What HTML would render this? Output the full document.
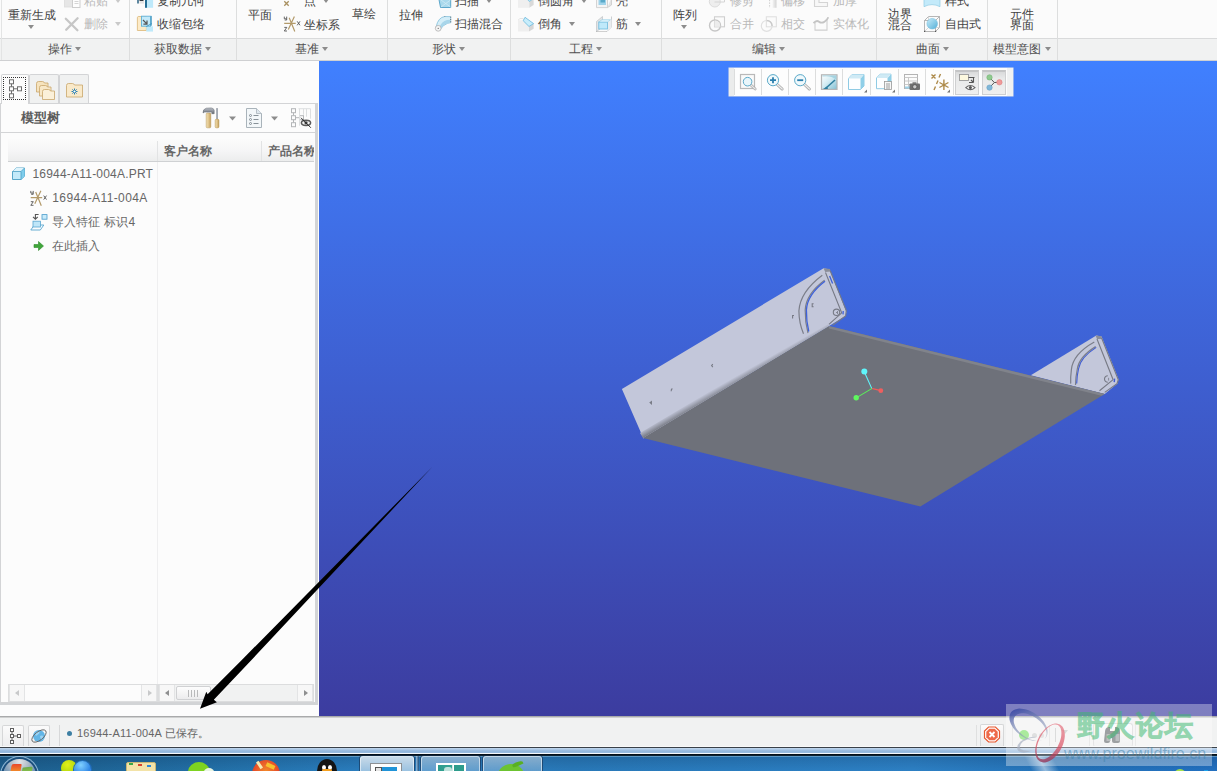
<!DOCTYPE html>
<html lang="zh">
<head>
<meta charset="utf-8">
<title>16944-A11-004A</title>
<style>
html,body{margin:0;padding:0}
body{width:1217px;height:771px;overflow:hidden;position:relative;background:#fcfcfc;font-family:"Liberation Sans",sans-serif;font-size:12px;color:#4a4a4a}
.abs{position:absolute}
#ribbon{left:0;top:0;width:1217px;height:38px;background:#fbfbfb;overflow:hidden}
#glabels{left:0;top:38px;width:1217px;height:21px;background:#f1f2f2;border-top:1px solid #d9dadb;border-bottom:1px solid #cfd0d2}
.gsep{position:absolute;top:0;width:1px;height:60px;background:#dddede}
.gl{position:absolute;top:42px;height:14px;line-height:14px;font-size:12px;color:#505050;white-space:nowrap}
.rt{position:absolute;height:14px;line-height:14px;font-size:12px;color:#444;white-space:nowrap}
.rt.dis{color:#b9b9b9}
.dd{position:absolute;width:0;height:0;border-left:3.5px solid transparent;border-right:3.5px solid transparent;border-top:4px solid #8c8c8c}
.dd.dis{border-top-color:#c9c9c9}
#view{left:319px;top:61px;width:898px;height:655px;background:linear-gradient(to bottom,#4080ff 0%,#3c3c9f 100%)}
#left{left:0;top:61px;width:319px;height:655px;background:#fcfcfc}
#status{left:0;top:716px;width:1217px;height:31px;background:#f1f2f2;border-top:1px solid #a9aaab;box-sizing:border-box}
#taskbar{left:0;top:746px;width:1217px;height:25px;overflow:hidden}
.tab{background:#f0f1f1;border:1px solid #d3d4d6;border-bottom:none;border-radius:2px 2px 0 0;box-sizing:border-box}
.tab.sel{background:#fcfcfc}
.ch{height:14px;line-height:14px;font-size:12px;font-weight:bold;color:#666;white-space:nowrap}
.tr{height:14px;line-height:14px;font-size:12px;color:#666;white-space:nowrap}
.sb{height:18px;background:#fcfcfc;border:1px solid #dcddde;box-sizing:border-box}
.sb.g{background:#f1f2f2}
.sb .sa{position:absolute;top:0;width:16px;height:16px;background:#f7f7f7;border-left:1px solid #e3e4e5;border-right:1px solid #e3e4e5;box-sizing:border-box}
.sb b{position:absolute;top:4.5px;width:0;height:0;border-top:3.5px solid transparent;border-bottom:3.5px solid transparent}
.sb .al{border-right:4px solid #c8c9ca}.sb .ar{border-left:4px solid #c8c9ca}
.sb .al.d{border-right-color:#8e8f90}.sb .ar.d{border-left-color:#8e8f90}
.sbtn{background:linear-gradient(#fbfbfb,#ececed);border:1px solid #d6d7d8;border-bottom:none;box-sizing:border-box;border-radius:2px 2px 0 0}
.vs{top:8px;width:1px;height:22px;background:#dfe0e0}
#taskbar .tbb{position:absolute;top:10px;height:20px;border:1px solid rgba(255,255,255,.55);border-bottom:none;border-radius:3px 3px 0 0;box-sizing:border-box;background:linear-gradient(rgba(255,255,255,.45),rgba(255,255,255,.18));box-shadow:0 0 0 1px rgba(20,40,70,.55)}
.tsep{top:69px;width:1px;height:26px;background:#dcdddd}
.tpress{background:linear-gradient(#d9dadb,#e9eaea 30%,#efefef);border:1px solid #cfd0d1;border-top:2px solid #c4c5c6;box-sizing:border-box}
</style>
</head>
<body>
<div id="ribbon" class="abs">
<span class="rt" style="left:8px;top:8.3px">重新生成</span>
<i class="dd" style="left:28.1px;top:24.6px"></i>
<span class="rt dis" style="left:84px;top:-6.5px">粘贴</span>
<i class="dd dis" style="left:114.8px;top:-1.5px"></i>
<span class="rt dis" style="left:84px;top:17.2px">删除</span>
<i class="dd dis" style="left:114.8px;top:22.2px"></i>
<span class="rt" style="left:157px;top:-6.5px">复制几何</span>
<span class="rt" style="left:157px;top:17.2px">收缩包络</span>
<span class="rt" style="left:248px;top:7.5px">平面</span>
<span class="rt" style="left:304px;top:-6.5px">点</span>
<i class="dd" style="left:322.8px;top:-1.5px"></i>
<span class="rt" style="left:304px;top:17.5px">坐标系</span>
<span class="rt" style="left:352px;top:6.8px">草绘</span>
<span class="rt" style="left:399px;top:7.5px">拉伸</span>
<span class="rt" style="left:455px;top:-6.5px">扫描</span>
<i class="dd" style="left:485.7px;top:-1.5px"></i>
<span class="rt" style="left:455px;top:17.2px">扫描混合</span>
<span class="rt" style="left:538px;top:-6.5px">倒圆角</span>
<i class="dd" style="left:581.3px;top:-1.5px"></i>
<span class="rt" style="left:538px;top:17.2px">倒角</span>
<i class="dd" style="left:568.9px;top:22.2px"></i>
<span class="rt" style="left:616px;top:-6.5px">壳</span>
<span class="rt" style="left:616px;top:17.2px">筋</span>
<i class="dd" style="left:635.0px;top:22.2px"></i>
<span class="rt" style="left:672.5px;top:8.0px">阵列</span>
<i class="dd" style="left:681.1px;top:24.6px"></i>
<span class="rt dis" style="left:729.5px;top:-6.5px">修剪</span>
<span class="rt dis" style="left:729.5px;top:17.2px">合并</span>
<span class="rt dis" style="left:781px;top:-6.5px">偏移</span>
<span class="rt dis" style="left:781px;top:17.2px">相交</span>
<span class="rt dis" style="left:833px;top:-6.5px">加厚</span>
<span class="rt dis" style="left:833px;top:17.2px">实体化</span>
<span class="rt" style="left:888px;top:6.5px">边界</span>
<span class="rt" style="left:888px;top:18.4px">混合</span>
<span class="rt" style="left:944.5px;top:-6.5px">样式</span>
<span class="rt" style="left:944.5px;top:17.2px">自由式</span>
<span class="rt" style="left:1010px;top:6.8px">元件</span>
<span class="rt" style="left:1010px;top:18.4px">界面</span>
<svg class="abs" style="left:0;top:0" width="1217" height="38" viewBox="0 0 1217 38">
<defs>
<linearGradient id="sph" x1="0" y1="0" x2="1" y2="1"><stop offset="0" stop-color="#c9ecf9"/><stop offset="1" stop-color="#55b0d8"/></linearGradient>
<linearGradient id="gbar" x1="0" y1="0" x2="1" y2="0"><stop offset="0" stop-color="#f4f4f4"/><stop offset="1" stop-color="#d4d4d4"/></linearGradient>
</defs>
<!-- paste (disabled) -->
<rect x="64.500" y="-4" width="9" height="11" fill="#e6e6e6" stroke="#dcdcdc" stroke-width="0.800"/>
<rect x="72.500" y="-3" width="7.500" height="10.500" fill="#fdfdfd" stroke="#cdcdcd" stroke-width="1"/>
<path d="M74.500,1.500h4M74.500,3.500h4" stroke="#d0d0d0" stroke-width="0.900"/>
<!-- delete X (disabled) -->
<path d="M65.800,18.800l11.600,11.400M77.600,18.200l-11.400,11.600" stroke="#c6c6c6" stroke-width="2.300" stroke-linecap="round"/>
<!-- copy geometry -->
<rect x="137" y="-3" width="2" height="6.500" fill="#5d87a0"/>
<rect x="139.500" y="-3" width="4" height="4" fill="#30373c"/>
<rect x="139.500" y="1" width="4.500" height="2.600" fill="#e4e4e4"/>
<rect x="145" y="-3" width="2.100" height="10.800" fill="#256f96"/>
<rect x="147.100" y="-3" width="6" height="10.800" fill="#bfe9fa"/>
<!-- shrinkwrap -->
<path d="M138.200,16.500 q-0.800,0.200 -0.800,1.200v12.800h9v-14z" fill="#fdebc8" stroke="#dfbd82" stroke-width="0.900"/>
<rect x="146.300" y="26.300" width="6.700" height="5.300" fill="#bfe9fa"/>
<rect x="141.500" y="16.200" width="9" height="10" fill="#c3eafa" stroke="#5fb0d8" stroke-width="0.900"/>
<path d="M150.500,16.200l1.300,-0.500v9.800l-1.300,0.700z" fill="#4f9fc6"/>
<path d="M146.300,26.500l5.500,-3" stroke="#3f95bd" stroke-width="0.900"/>
<path d="M143,20l3.600,3.600M147,20.500v3.600h-3.600" stroke="#555" stroke-width="1.200" fill="none"/>
<!-- point -->
<path d="M284.300,1.300l4.400,4.400M288.700,1.300l-4.400,4.400" stroke="#a89060" stroke-width="1.300"/>
<!-- csys -->
<g stroke="#b39a6a" stroke-width="1.200" fill="none"><path d="M284.200,23.400h11.500M289.200,17.800l5.600,13.700M294.400,16.500l-6.100,13"/></g>
<g stroke="#555" stroke-width="0.900" fill="none"><path d="M284.300,16.600v2.200h2.400v-2.200M286.700,18.800v1.200h-2"/><path d="M284.300,27.400h2.500l-2.500,3.600h2.700"/><path d="M297.200,21.300l2.800,4M300,21.300l-2.800,4"/></g>
<!-- sweep -->
<path d="M438.500,-3l2,10.500h10.200v-10.500z" fill="#a9d9ec" stroke="#4f9fc6" stroke-width="0.900"/>
<path d="M441,0l9.500,7M450.500,0l-9.500,7" stroke="#cfeaf5" stroke-width="0.800"/>
<!-- swept blend -->
<path d="M436.200,26.500 q2,-9 8.500,-10 l6,0.200 v6 l-3,0.500 q-5,1.500 -8.500,7.800z" fill="#d4eef8" stroke="#7fbedb" stroke-width="0.800"/>
<path d="M438.500,29 q3,-8 8.500,-9 l3.700,-0.300 v3 l-3,0.500 q-5,1.500 -8,7.500z" fill="#a9d6ea"/>
<path d="M444.700,16.500v0.500 M450.700,16.700v6" stroke="#666" stroke-width="0.900" stroke-dasharray="1 1.300"/>
<circle cx="438.200" cy="28.300" r="2.900" fill="#f4f4f4" stroke="#b9b9b9" stroke-width="0.900"/>
<circle cx="438.200" cy="28.300" r="0.600" fill="#555"/>
<!-- round -->
<path d="M518,-3h11.300v10.800h-11.300z" fill="#efefef"/>
<path d="M529.300,1.500l4.300,-3v6.500l-4.300,2.800z" fill="#d9d9d9"/>
<path d="M523,-3h10.600v1.500l-4.300,3q-2,-3.500 -6.300,-4.500z" fill="#bfe9fa" stroke="#6ab8dc" stroke-width="0.700"/>
<!-- chamfer -->
<path d="M518,20.200h5.200l5.800,6.300v5.100h-11z" fill="#efefef"/>
<path d="M529,26.500l4.600,-2.900v5.200l-4.600,2.800z" fill="#d6d6d6"/>
<path d="M525,17.300l8.600,6.300l-4.600,2.900l-5.800,-5.800z" fill="#c7edfb" stroke="#6ab8dc" stroke-width="0.800"/>
<path d="M518,20.200l2,-1.700h3.500" stroke="#e0e0e0" stroke-width="0.800" fill="none"/>
<!-- shell -->
<path d="M596.500,-3h11v10.600h-11z" fill="#f4f4f4" stroke="#c9c9c9" stroke-width="0.800"/>
<path d="M607.500,7.600l4,-2.600v-8" stroke="#c9c9c9" stroke-width="0.800" fill="#e4e4e4"/>
<rect x="598.500" y="-3" width="7.500" height="8" fill="#9fd3ea"/>
<rect x="600.500" y="-3" width="4.500" height="5.500" fill="#5aa9c9"/>
<!-- rib -->
<path d="M596.500,21.500l6,-5v10.500l-6,4.500z" fill="#e1e4e6" stroke="#bfc3c6" stroke-width="0.700"/>
<path d="M611.500,16.500v10.500l-4.500,4.500" fill="none" stroke="#bfc3c6" stroke-width="0.800"/>
<path d="M607.500,22.500l4,-3v8l-4,3z" fill="#e9ecee"/>
<rect x="598.800" y="22" width="8.700" height="7" fill="#bfe9fa" stroke="#6ab8dc" stroke-width="0.800"/>
<path d="M598.800,22l3.200,-2.300h8.500l-3,2.300z" fill="#dff4fc" stroke="#8fcbe4" stroke-width="0.600"/>
<path d="M596.500,31.500h10.500" stroke="#9a9a9a" stroke-width="0.900" stroke-dasharray="1 1"/>
<!-- trim, offset, thicken (disabled, row1) -->
<circle cx="714.800" cy="1.500" r="5.500" fill="#eeeeee" stroke="#dcdcdc" stroke-width="1"/>
<path d="M714.500,-3h10v5h-10" fill="none" stroke="#d4d4d4" stroke-width="1"/>
<path d="M769.600,-3v11" stroke="#cfcfcf" stroke-width="1" stroke-dasharray="1.500 1.200"/>
<rect x="772.500" y="-3" width="4" height="10.800" fill="url(#gbar)"/>
<path d="M814.500,-3v9.500h13v-4h-8.500v-5.500" fill="#f7f7f7" stroke="#d4d4d4" stroke-width="1.100"/>
<!-- merge, intersect, solidify (disabled) -->
<rect x="714.500" y="16.800" width="10" height="10" fill="none" stroke="#cfcfcf" stroke-width="1.100"/>
<circle cx="715" cy="25.500" r="5.500" fill="none" stroke="#c6c6c6" stroke-width="1.400"/>
<path d="M714.500,20.500v6.300h5.800a5.500,5.500 0 0 0 -5.800,-6.300z" fill="#ececec"/>
<rect x="766.300" y="16.800" width="10" height="10" fill="none" stroke="#dedede" stroke-width="1"/>
<circle cx="766.700" cy="25.900" r="5.400" fill="none" stroke="#e0e0e0" stroke-width="1.200"/>
<path d="M766.700,20.500a5.400,5.400 0 0 1 5.400,5.400" fill="none" stroke="#c9c9c9" stroke-width="1.400"/>
<path d="M815,22.500v7.600h12v-10" fill="none" stroke="#d0d0d0" stroke-width="1.100"/>
<path d="M813.500,23.200q3,-3.500 5.500,-1.500t5.500,0t3.800,-4.400" fill="none" stroke="#c4c4c4" stroke-width="1.800"/>
<!-- style -->
<path d="M924,-3h16v9.700q-8,-4.200 -16,0z" fill="#c3eafa" stroke="#8fcbe4" stroke-width="0.700"/>
<!-- freestyle -->
<g fill="none" stroke="#a4a4a4" stroke-width="0.800"><path d="M924.500,20.500l4,-4h11v11l-4,4h-11z"/><path d="M924.500,20.500h11v11M935.500,20.500l4,-4"/><path d="M928.500,16.500v11h11M928.500,27.500l-4,4" stroke="#cfcfcf"/></g>
<circle cx="932.200" cy="23.700" r="5.300" fill="url(#sph)" stroke="#6ab8dc" stroke-width="0.500"/>
<g fill="#555"><rect x="924" y="30.800" width="1.200" height="1.200"/><rect x="935" y="30.800" width="1.200" height="1.200"/></g>
</svg>

</div>
<div id="glabels" class="abs"></div>
<div class="gsep" style="left:1px;background:#e3e4e4"></div>
<div class="gsep" style="left:129px"></div>
<div class="gsep" style="left:236px"></div>
<div class="gsep" style="left:387px"></div>
<div class="gsep" style="left:510px"></div>
<div class="gsep" style="left:661px"></div>
<div class="gsep" style="left:876px"></div>
<div class="gsep" style="left:987px"></div>
<div class="gsep" style="left:1057px"></div>
<span class="gl" style="left:48px">操作</span><i class="dd" style="left:75.0px;top:47px"></i>
<span class="gl" style="left:153.5px">获取数据</span><i class="dd" style="left:204.5px;top:47px"></i>
<span class="gl" style="left:294.5px">基准</span><i class="dd" style="left:322.2px;top:47px"></i>
<span class="gl" style="left:431.5px">形状</span><i class="dd" style="left:458.9px;top:47px"></i>
<span class="gl" style="left:569px">工程</span><i class="dd" style="left:596.1px;top:47px"></i>
<span class="gl" style="left:751.5px">编辑</span><i class="dd" style="left:779.3px;top:47px"></i>
<span class="gl" style="left:915.5px">曲面</span><i class="dd" style="left:942.5px;top:47px"></i>
<span class="gl" style="left:993px">模型意图</span><i class="dd" style="left:1044.5px;top:47px"></i>
<div id="left" class="abs">
<div class="abs" style="left:0;top:42px;width:315px;height:600px;border:1px solid #d3d4d6;border-right:none;box-sizing:border-box"></div>
<div class="abs" style="left:315px;top:42px;width:3px;height:602px;background:#d2d4d6"></div>
<div class="abs tab" style="left:29px;top:13px;width:30px;height:29px"></div>
<div class="abs tab" style="left:59px;top:13px;width:30px;height:29px"></div>
<div class="abs tab sel" style="left:1px;top:13px;width:28px;height:30px"></div>
<div class="abs" style="left:3px;top:16px;width:23px;height:23px;border:1px dotted #333;box-sizing:border-box"></div>
<svg class="abs" style="left:0;top:0" width="100" height="45" viewBox="0 0 100 45">
<g fill="#fdfdfd" stroke="#6e6e6e" stroke-width="1" transform="translate(0 -0.7)">
<rect x="9.5" y="19.5" width="4" height="4"/><rect x="9.5" y="26.5" width="4" height="4"/><rect x="9.5" y="33.5" width="4" height="4"/><rect x="17.5" y="26.5" width="4" height="4"/>
<path d="M11.5,23.5v3M11.5,30.5v3M13.5,28.5h4" fill="none"/>
</g>
<g stroke="#c9a66b" stroke-width="0.8">
<path d="M36.5,22.5 q0,-2 2,-2 h4 q1.5,0 2,1.5 h3.5 v9 h-11.5z" fill="#f6e3bd"/>
<path d="M39.5,26.5 q0,-2 2,-2 h4 q1.5,0 2,1.5 h3.5 v9 h-11.5z" fill="#f8e8c8"/>
<path d="M42.5,30.5 q0,-2 2,-2 h4 q1.5,0 2,1.5 h4 v8.5 h-12z" fill="#fbf0d9"/>
<path d="M66.5,24.5 q0,-2 2,-2 h4 q1.5,0 2,1.5 h8 v12 h-16z" fill="#f9e9c9"/>
</g>
<g stroke="#2b7fae" stroke-width="1" fill="none"><path d="M74.5,27.5v6M71.5,30.5h6M72.4,28.4l4.2,4.2M76.6,28.4l-4.2,4.2"/></g>
<circle cx="74.5" cy="30.5" r="1.1" fill="#fff"/>
</svg>
<span class="abs" style="left:21px;top:50px;height:14px;line-height:14px;font-size:12.5px;font-weight:bold;color:#5a5a5a;white-space:nowrap">模型树</span>
<svg class="abs" style="left:198px;top:44px" width="118" height="26" viewBox="198 105 118 26">
<!-- hammer + screwdriver -->
<defs><linearGradient id="hh" x1="0" y1="0" x2="1" y2="0"><stop offset="0" stop-color="#f0dfb4"/><stop offset=".5" stop-color="#e2c68c"/><stop offset="1" stop-color="#bf9c5c"/></linearGradient>
<linearGradient id="hm" x1="0" y1="0" x2="0" y2="1"><stop offset="0" stop-color="#b9bec6"/><stop offset="1" stop-color="#6a6f78"/></linearGradient></defs>
<rect x="206.200" y="113" width="4.600" height="14.800" rx="1" fill="url(#hh)" stroke="#b89858" stroke-width="0.500"/>
<path d="M203,113 q-0.300,-3.800 3.200,-4.800 l5,-0.300 q2.600,0.300 3,2.400 v3.400 h-2.400 v-1.600 h-5.600 q-1.800,-0.600 -3.200,0.900z" fill="url(#hm)" stroke="#5e646d" stroke-width="0.500"/>
<rect x="216.200" y="108.100" width="1.700" height="11.400" fill="#9aa0aa"/>
<rect x="215.200" y="119.300" width="3.700" height="8.500" rx="1" fill="url(#hh)" stroke="#b08a40" stroke-width="0.500"/>
<path d="M229,116.5h7l-3.5,4z" fill="#8c8c8c"/>
<!-- doc -->
<path d="M246.5,108.5h10l5,5v14h-15z" fill="#f3f7f9" stroke="#a9b3ba" stroke-width="1"/>
<path d="M256.5,108.5v5h5" fill="#dfe8ee" stroke="#a9b3ba" stroke-width="0.8"/>
<g stroke="#7b858c" stroke-width="0.9" fill="none"><circle cx="250.5" cy="115.5" r="1"/><circle cx="250.5" cy="119.5" r="1"/><circle cx="250.5" cy="123.5" r="1"/><path d="M253.5,115.5h5M253.5,119.5h5M253.5,123.5h5"/></g>
<path d="M271,116.5h7l-3.5,4z" fill="#8c8c8c"/>
<!-- tree + eye -->
<g fill="#fcfcfc" stroke="#b4b6b8" stroke-width="1" transform="translate(0 -0.800)"><rect x="291.5" y="109.500" width="4" height="4"/><rect x="291.500" y="116.500" width="4" height="4"/><rect x="291.500" y="123.500" width="4" height="4"/><rect x="299.500" y="116.500" width="4" height="4"/><path d="M293.5,113.500v3M293.500,120.500v3M295.500,118.500h4" fill="none"/></g>
<g stroke="#dddfe0" stroke-width="1" fill="none" transform="translate(0 -0.800)"><path d="M298.500,109.500h12M299.500,109.500v17M303.500,109.500v6M306.500,109.500v8M310.500,109.500v10"/></g>
<ellipse cx="306" cy="122.800" rx="4.600" ry="2.600" fill="#f4f4f4" stroke="#5a5a5a" stroke-width="1.500"/>
<circle cx="306" cy="122.800" r="1.600" fill="#444"/>
<path d="M301,117.800l9.900,10" stroke="#222" stroke-width="0.900"/>
</svg>
<div class="abs" style="left:1px;top:71px;width:314px;height:1px;background:#d3d4d6"></div>
<div class="abs" style="left:8px;top:78px;width:306px;height:22px;background:linear-gradient(#fbfbfb,#f5f5f6 55%,#eceded);border-bottom:1px solid #cfd1d3;overflow:hidden">
<div class="abs" style="left:149px;top:2px;width:1px;height:21px;background:#e2e3e4"></div>
<div class="abs" style="left:253px;top:2px;width:1px;height:21px;background:#e2e3e4"></div>
<span class="abs ch" style="left:156px;top:5px">客户名称</span>
<span class="abs ch" style="left:260px;top:5px">产品名称</span>
</div>
<div class="abs" style="left:157px;top:101px;width:1px;height:522px;background:#efeff0"></div>
<!-- tree rows -->
<svg class="abs" style="left:0;top:100px" width="60" height="100" viewBox="0 161 60 100">
<path d="M12.500,171.500l3.500,-3.500h8.500v8.300l-3.500,3.200h-8.500z" fill="#c3eafa" stroke="#4a9ec4" stroke-width="0.900"/>
<path d="M12.500,171.500l3.500,-3.500h8.500l-3.500,3.500z" fill="#dff4fc"/>
<path d="M21,171.500l3.500,-3.500v8.300l-3.500,3.200z" fill="#7fcdec"/>
<path d="M12.500,171.500h8.500v8M21,171.500l3.500,-3.500" fill="none" stroke="#4a9ec4" stroke-width="0.800"/>
<!-- csys -->
<g transform="translate(-253.500 174.300)"><g stroke="#b39a6a" stroke-width="1.200" fill="none"><path d="M284.200,23.400h11.500M289.200,17.800l5.600,13.700M294.400,16.500l-6.100,13"/></g>
<g stroke="#555" stroke-width="0.900" fill="none"><path d="M284.300,16.600v2.200h2.400v-2.200M286.700,18.800v1.200h-2"/><path d="M284.300,27.400h2.500l-2.500,3.600h2.700"/><path d="M297.200,21.300l2.800,4M300,21.300l-2.800,4"/></g></g>
<!-- import feature -->
<path d="M30.800,230l3.500,-5h9.500l-3.500,5z" fill="#fbfdfe" stroke="#5aa6cf" stroke-width="0.900"/>
<rect x="33" y="221.200" width="7.500" height="5.800" fill="#bfe6f8" stroke="#5aa6cf" stroke-width="0.800"/>
<rect x="42" y="214.600" width="5" height="4.600" fill="#c9ebfa" stroke="#4a9ccb" stroke-width="0.800"/>
<path d="M38.600,214.500h-3.200v4.200M33,216.800l2.400,2.400l2.400,-2.400" fill="none" stroke="#555" stroke-width="1.100"/>
<!-- insert arrow -->
<path d="M34,244.500h4.500v-3l5,4.500l-5,4.500v-3h-4.500z" fill="#3fa63a" stroke="#2f8a2c" stroke-width="0.6"/>
</svg>
<span class="abs tr" style="left:32.500px;top:106px;letter-spacing:0.2px">16944-A11-004A.PRT</span>
<span class="abs tr" style="left:52.300px;top:130px;letter-spacing:0.4px">16944-A11-004A</span>
<span class="abs tr" style="left:52px;top:154px;letter-spacing:0.15px">导入特征 标识4</span>
<span class="abs tr" style="left:52px;top:178px">在此插入</span>
<!-- scrollbars -->
<div class="abs sb" style="left:8px;top:623px;width:150px"><i class="sa" style="left:0"></i><b class="al" style="left:6px"></b><i class="sa" style="right:0"></i><b class="ar" style="right:5px"></b></div>
<div class="abs sb g" style="left:158px;top:623px;width:156px"><i class="sa" style="left:0"></i><b class="al d" style="left:6px"></b><i class="sa" style="right:0"></i><b class="ar d" style="right:5px"></b>
<div class="abs" style="left:17px;top:1px;width:35px;height:14px;border:1px solid #d0d1d3;border-radius:2px;background:linear-gradient(#fdfdfd,#ececed);box-sizing:border-box"></div>
<div class="abs" style="left:29px;top:5px;width:1px;height:7px;background:#b9babb;box-shadow:3px 0 0 #b9babb,6px 0 0 #b9babb,9px 0 0 #b9babb"></div>
</div>
<div class="abs" style="left:0;top:642px;width:318px;height:2px;background:#d2d4d6"></div>

</div>
<div id="view" class="abs"></div>
<div class="abs" style="left:729px;top:68px;width:284px;height:28px;background:#fdfdfd;box-shadow:0 0 0 0.5px #e4e6e8"></div>
<div class="abs" style="left:729px;top:68px;width:5px;height:28px;background:#ebecec"></div>
<div class="abs" style="left:1007px;top:68px;width:6px;height:28px;background:#f0f1f1"></div>
<div class="abs tsep" style="left:734px"></div><div class="abs tsep" style="left:761px"></div><div class="abs tsep" style="left:788px"></div><div class="abs tsep" style="left:815px"></div><div class="abs tsep" style="left:842px"></div><div class="abs tsep" style="left:870px"></div><div class="abs tsep" style="left:898px"></div><div class="abs tsep" style="left:925px"></div><div class="abs tsep" style="left:953px"></div>
<div class="abs tpress" style="left:955px;top:70px;width:24px;height:25px"></div>
<div class="abs tpress" style="left:982px;top:70px;width:24px;height:25px"></div>
<svg class="abs" style="left:729px;top:68px" width="284" height="28" viewBox="729 68 284 28">
<!-- 1 zoom fit -->
<rect x="740.500" y="74.500" width="14" height="14" fill="#fafafa" stroke="#b9b9b9" stroke-width="1.200"/>
<path d="M750.600,84.700l4.600,4.300" stroke="#a9a9a9" stroke-width="2.600" stroke-linecap="round"/>
<path d="M750.600,84.700l4.600,4.300" stroke="#e8e8e8" stroke-width="1.200" stroke-linecap="round"/>
<circle cx="747.600" cy="81.700" r="4.300" fill="#e9f6fb" stroke="#5aa9c9" stroke-width="1"/>
<!-- 2 zoom in -->
<path d="M777,84.300l5.200,4.800" stroke="#a9a9a9" stroke-width="2.800" stroke-linecap="round"/>
<path d="M777,84.300l5.200,4.800" stroke="#ececec" stroke-width="1.300" stroke-linecap="round"/>
<circle cx="773" cy="80.200" r="5.600" fill="#f0f9fc" stroke="#5aa9c9" stroke-width="1"/>
<path d="M770,80.200h6M773,77.200v6" stroke="#2b7fae" stroke-width="1.800"/>
<!-- 3 zoom out -->
<path d="M804.200,84.300l5.200,4.800" stroke="#a9a9a9" stroke-width="2.800" stroke-linecap="round"/>
<path d="M804.200,84.300l5.200,4.800" stroke="#ececec" stroke-width="1.300" stroke-linecap="round"/>
<circle cx="800.200" cy="80.200" r="5.600" fill="#f0f9fc" stroke="#5aa9c9" stroke-width="1"/>
<path d="M797.200,80.200h6" stroke="#2b7fae" stroke-width="1.800"/>
<!-- 4 repaint -->
<defs><linearGradient id="rp" x1="0" y1="0" x2="1" y2="1"><stop offset="0" stop-color="#ffffff"/><stop offset=".45" stop-color="#d4ecf3"/><stop offset="1" stop-color="#7fbfd3"/></linearGradient></defs>
<rect x="821.500" y="74.800" width="15.500" height="14.600" fill="url(#rp)" stroke="#b5b5b5" stroke-width="1.200"/>
<path d="M822.500,76.500 q8,-1.500 13.800,3 v-4 h-13.800z" fill="#a4d3e1"/>
<path d="M825.500,88.500l9.500,-8.500" stroke="#2f7f9f" stroke-width="1.600"/>
<path d="M823,89l4,-2.500l1,2.500z" fill="#2f7f9f"/>
<!-- 5 cube -->
<path d="M848.500,78.500l3.500,-4h12v11.500l-3.500,3.500h-12z" fill="#fdfeff" stroke="#8fcbe4" stroke-width="1"/>
<path d="M860.500,78.500l3.500,-4v11.500l-3.500,3.500z" fill="#8fcfe8"/>
<path d="M848.500,78.500l3.500,-4h12l-3.500,4z" fill="#cfeaf5"/>
<path d="M867,89.500v3h-3z" fill="#777"/>
<!-- 6 saved views -->
<path d="M876.500,78l3.500,-3.800h11v11l-3.500,3.500h-11z" fill="#fdfeff" stroke="#8fcbe4" stroke-width="1"/>
<path d="M887.500,78l3.500,-3.800v11l-3.500,3.500z" fill="#8fcfe8"/>
<path d="M876.500,78l3.500,-3.800h11l-3.500,3.800z" fill="#cfeaf5"/>
<rect x="884.500" y="81.500" width="7" height="8" fill="#f7f7f7" stroke="#9a9a9a" stroke-width="0.800"/>
<path d="M886,84h4M886,86h4M886,88h4" stroke="#777" stroke-width="0.700"/>
<path d="M895,89.500v3h-3z" fill="#777"/>
<!-- 7 view manager -->
<rect x="904.500" y="74.500" width="13" height="14" fill="#fcfcfc" stroke="#b4b4b4" stroke-width="1"/>
<path d="M904.500,77.500h13M904.500,81h13M904.500,84.500h13M908.500,77.500v11" stroke="#c4c4c4" stroke-width="0.900" fill="none"/>
<path d="M905,86.500h6v2h-6z" fill="#9fd3ea"/>
<rect x="909.500" y="83.500" width="10.500" height="6.500" rx="1" fill="#6f6f6f"/>
<rect x="912.500" y="82.300" width="4" height="1.600" fill="#6f6f6f"/>
<circle cx="914.800" cy="86.800" r="2.100" fill="#c9c9c9" stroke="#444" stroke-width="0.600"/>
<!-- 8 datum display -->
<g stroke="#ad8a4a" stroke-width="1.400" fill="none"><path d="M931.500,74.500l4,4M935.500,74.500l-4,4M940.500,74l-1.500,3.500M938,80.500l-1.500,3.500M935.500,86.500l-1.500,3.500M943.900,79.500v10.500M939.500,82.500l9,5M948.400,82.500l-9,5"/></g>
<path d="M950,89.500v3h-3z" fill="#777"/>
<!-- 9 -->
<rect x="959.500" y="74.500" width="9" height="6" fill="#fdf9df" stroke="#9a9a9a" stroke-width="0.900"/>
<path d="M968.500,77.500h6M973.500,77.500v5M971,80l2.500,2.500M969,82.500h4.500" stroke="#555" stroke-width="1.100" fill="none"/>
<path d="M965.800,87.600q4.600,-4.200 9.200,0q-4.600,4.200 -9.200,0z" fill="#fff" stroke="#666" stroke-width="1.100"/>
<circle cx="970.400" cy="87.600" r="1.500" fill="#555"/>
<!-- 10 -->
<path d="M989.500,77.400l4.800,5.100l5.100,-0.200M994.300,82.500l-4.800,5.100" stroke="#555" stroke-width="1" fill="none"/>
<circle cx="989.500" cy="77.400" r="2.700" fill="#8fca8f" stroke="#6fae6f" stroke-width="0.500"/>
<circle cx="999.400" cy="82.300" r="2.700" fill="#f09a9a" stroke="#d87a7a" stroke-width="0.500"/>
<circle cx="989.500" cy="87.600" r="2.700" fill="#7fb6d8" stroke="#5f9ac0" stroke-width="0.500"/>
</svg>

<div id="status" class="abs">
<div class="abs" style="left:0;top:0;width:1217px;height:1px;background:#cfd0d0"></div>
<div class="abs sbtn" style="left:2px;top:8px;width:22px;height:22px"></div>
<div class="abs sbtn" style="left:28px;top:8px;width:22px;height:22px"></div>
<svg class="abs" style="left:0;top:8px" width="60" height="22" viewBox="0 725 60 22">
<g fill="#fdfdfd" stroke="#5e5e5e" stroke-width="1"><rect x="10.500" y="728.500" width="3" height="3"/><rect x="10.500" y="734.500" width="3" height="3"/><rect x="10.500" y="740.500" width="3" height="3"/><rect x="17.500" y="734.500" width="3" height="3"/><path d="M12,731.500v3M12,737.500v3M13.500,736h4" fill="none"/></g>
<circle cx="39" cy="736" r="6" fill="#62b5e6"/>
<path d="M35.500,733 q2,-2.500 4,-1.500 q0.500,2 -1.500,3 q-1.500,2 -2.800,0.500z M40,736 q2.500,-1 3.500,0.500 q0,2.500 -2,3.500 q-1.500,-1.500 -1.500,-4z" fill="#9ad3f3"/>
<ellipse cx="39" cy="736" rx="8.500" ry="4.200" transform="rotate(-38 39 736)" fill="none" stroke="#666" stroke-width="0.900"/>
</svg>
<div class="abs" style="left:59px;top:8px;width:1px;height:22px;background:#d7d8d9"></div>
<div class="abs" style="left:67px;top:14px;width:5px;height:5px;border-radius:50%;background:#3d7fa3"></div>
<span class="abs" style="left:77px;top:9px;height:14px;line-height:14px;font-size:11px;color:#666;white-space:nowrap;letter-spacing:0.2px">16944-A11-004A 已保存。</span>
<div class="abs vs" style="left:976px"></div><div class="abs vs" style="left:1012px"></div><div class="abs vs" style="left:1049px"></div><div class="abs vs" style="left:1089px"></div><div class="abs vs" style="left:1135px"></div>
<div class="abs sbtn" style="left:980px;top:7px;width:24px;height:22px"></div>
<svg class="abs" style="left:980px;top:7px" width="24" height="22" viewBox="980 724.500 24 22">
<polygon points="988.600,727.500 995.400,727.500 999.500,731.600 999.500,738.400 995.400,742.500 988.600,742.500 984.500,738.400 984.500,731.600" fill="#fff" stroke="#e8582f" stroke-width="1.200"/>
<polygon points="989.300,729.300 994.700,729.300 997.700,732.300 997.700,737.700 994.700,740.700 989.300,740.700 986.300,737.700 986.300,732.300" fill="#ee6a4a"/>
<path d="M989.500,732.500l5,5M994.500,732.500l-5,5" stroke="#fff" stroke-width="1.800"/>
</svg>
<div class="abs" style="left:1019px;top:13px;width:10px;height:10px;border-radius:50%;background:#7fe06a"></div>
<div class="abs" style="left:1032px;top:16px;width:5px;height:5px;border-radius:50%;background:#cfd0d0"></div>
<div class="abs" style="left:1039px;top:16px;width:5px;height:5px;border-radius:50%;background:#d6d7d7"></div>
<div class="abs" style="left:1055px;top:11px;width:1px;height:14px;background:#c9caca"></div>
<div class="abs" style="left:1062px;top:13px;width:0;height:0;border-left:3px solid transparent;border-right:3px solid transparent;border-top:4px solid #c5c6c6"></div>
<div class="abs sbtn" style="left:1093px;top:6px;width:40px;height:24px;border-radius:3px"></div>
<svg class="abs" style="left:1100px;top:8px" width="26" height="22" viewBox="1100 726 26 22">
<path d="M1105,733 q0,-4 3,-5 h2 v4 h5 v-4 h2 q3,1 3,5 v9 q0,2 -2,2 h-4 q-2,0 -2,-2 v-3 h-2 v3 q0,2 -2,2 h-2 q-2,0 -2,-2z" fill="#6b6f73"/>
<path d="M1106.500,735h4v7h-4zM1115.500,735h4v7h-4z" fill="#9a9ea2"/>
</svg>

</div>
<div id="taskbar" class="abs">
<div class="abs" style="left:0;top:0;width:1217px;height:25px;background:linear-gradient(to right,#1d5f8d 0%,#1f6698 8%,#2473ac 20%,#2c80c2 32%,#2979b8 47%,#2a7cbe 60%,#2d80c4 75%,#2472b8 88%,#2270c0 100%)"></div>
<div class="abs" style="left:0;top:9px;width:1217px;height:16px;background:linear-gradient(rgba(0,20,50,.18),rgba(0,0,0,0))"></div>
<div class="abs" style="left:0;top:0;width:1217px;height:1px;background:#f9f9f9"></div>
<div class="abs" style="left:0;top:1px;width:1217px;height:1px;background:#3a4148"></div>
<div class="abs" style="left:0;top:2px;width:1217px;height:5px;background:linear-gradient(#c3d8ee,#9dbee1 45%,#8fb5db 80%,#9fc0e2)"></div>
<div class="abs" style="left:0;top:7px;width:1217px;height:1px;background:#f4f8fc"></div>
<div class="abs" style="left:0;top:8px;width:1217px;height:2px;background:linear-gradient(#02080e,#0f2a3e)"></div>
<div class="abs" style="left:0;top:10px;width:1217px;height:1px;background:rgba(140,190,220,.55)"></div>
<!-- start orb -->
<div class="abs" style="left:0.500px;top:11px;width:37px;height:37px;border-radius:50%;background:#1a4f7d;box-shadow:0 0 0 1px rgba(175,210,235,.75)"></div>
<div class="abs" style="left:2.500px;top:13px;width:33px;height:33px;border-radius:50%;background:radial-gradient(circle at 50% 8%,#e3e5e8 0%,#b9c3cd 22%,#7f9db8 45%,#3f76a5 75%)"></div>
<div class="abs" style="left:11px;top:18px;width:9.500px;height:9px;background:linear-gradient(#e8472a,#f39a2a);border-radius:2px 1px 0 0;transform:skewX(-10deg)"></div>
<div class="abs" style="left:22px;top:20.500px;width:9.500px;height:8px;background:linear-gradient(#6aa84a,#9fd24a);border-radius:1px 2px 0 0;transform:skewX(-10deg) skewY(-6deg)"></div>
<!-- icons -->
<div class="abs" style="left:61px;top:14px;width:16px;height:16px;border-radius:50%;background:radial-gradient(circle at 40% 30%,#e2f01a,#95c800)"></div>
<div class="abs" style="left:73.500px;top:14.500px;width:17px;height:17px;border-radius:50%;background:radial-gradient(circle at 40% 25%,#7fd0ff,#2f86e6 60%);box-shadow:0 0 0 1px #1f6ab8"></div>
<div class="abs" style="left:126px;top:16px;width:30px;height:12px;background:#f3e3a8;border:1px solid #c9b675;border-radius:2px;box-sizing:border-box"></div>
<div class="abs" style="left:129px;top:17px;width:4px;height:2px;background:#3aa845;box-shadow:9px 1px 0 #d9432f,18px 2px 0 #2f8ad8"></div>
<div class="abs" style="left:188px;top:16px;width:22px;height:20px;border-radius:50%;background:#7ed321"></div>
<div class="abs" style="left:204px;top:22px;width:10px;height:8px;border-radius:50%;background:#e9f5e2"></div>
<div class="abs" style="left:252px;top:14px;width:28px;height:28px;border-radius:50%;background:radial-gradient(circle at 50% 40%,#f28a2a,#e23c28 70%)"></div>
<div class="abs" style="left:258px;top:15px;width:3px;height:8px;background:#f6e9b0;transform:rotate(-35deg)"></div>
<div class="abs" style="left:266px;top:18px;width:9px;height:4px;background:#f7c12e;transform:rotate(25deg)"></div>
<div class="abs" style="left:317px;top:13px;width:20px;height:24px;border-radius:50% 50% 40% 40%;background:#141414"></div>
<div class="abs" style="left:322px;top:19px;width:4px;height:5px;border-radius:50%;background:#fff;box-shadow:6px 0 0 #fff"></div>
<div class="abs" style="left:322px;top:23px;width:10px;height:3px;border-radius:2px;background:#f5a020"></div>
<!-- running buttons -->
<div class="tbb" style="left:360px;width:54px;background:linear-gradient(rgba(255,255,255,.75),rgba(255,255,255,.45))"></div>
<div class="abs" style="left:416px;top:10px;width:3px;height:15px;background:linear-gradient(to right,rgba(255,255,255,.5),rgba(20,40,70,.5))"></div>
<div class="tbb" style="left:421px;width:59px"></div>
<div class="tbb" style="left:483px;width:59px"></div>
<div class="abs" style="left:370px;top:17px;width:32px;height:10px;background:#fdfdfd;border:1px solid #8d9094;box-sizing:border-box"></div>
<div class="abs" style="left:375px;top:21px;width:7px;height:6px;background:#e4e4e4;border:1px solid #555;box-sizing:border-box"></div>
<div class="abs" style="left:382px;top:21px;width:15px;height:6px;background:#1f93d8"></div>
<div class="abs" style="left:436px;top:17px;width:30px;height:10px;background:#fff"></div>
<div class="abs" style="left:438px;top:19px;width:26px;height:8px;background:linear-gradient(to right,#2d9c8c 0%,#37a596 55%,#fff 56%,#fff 62%,#2d9c8c 63%)"></div>
<div class="abs" style="left:444px;top:21px;width:8px;height:6px;background:#bfe3dc;border-radius:3px 3px 0 0"></div>
<div class="abs" style="left:497px;top:18px;width:28px;height:28px;border-radius:50%;background:radial-gradient(circle at 50% 45%,#f4fbe8 0 22%,#6cc330 24%)"></div>
<div class="abs" style="left:512px;top:15.500px;width:11px;height:3.500px;border-radius:60% 90% 10% 60%;background:#58b021;transform:rotate(-24deg)"></div>
<div class="abs" style="left:1174px;top:22.500px;width:12px;height:12px;border-radius:50%;background:#a4e04a"></div>
<div class="abs" style="left:1204px;top:24px;width:4px;height:3px;background:#1aa0e8"></div>
<div class="abs" style="left:1010px;top:10px;width:70px;height:15px;background:linear-gradient(62deg,rgba(255,255,255,0) 28%,rgba(255,255,255,.5) 46%,rgba(255,255,255,0) 64%)"></div>

</div>
<svg class="abs" id="scene" style="left:0;top:0" width="1217" height="771" viewBox="0 0 1217 771">
<defs>
<linearGradient id="bendL" gradientUnits="userSpaceOnUse" x1="733" y1="378" x2="737" y2="385"><stop offset="0" stop-color="#c3c7da"/><stop offset="1" stop-color="#6e717a"/></linearGradient>
</defs>
<!-- right flange -->
<polygon points="1030.8,375.3 1096.3,335.6 1101.5,336.5 1118.6,379.5 1117.5,383.5 1104.7,393.9" fill="#c3c7da"/>
<!-- left flange -->
<polygon points="621.9,389 823.6,268.2 829.5,269.5 846.4,312 845.5,316 829,326 643.5,438.5" fill="#c3c7da"/>
<!-- plate -->
<polygon points="829,326 1104.7,393.9 920.4,506.5 643,438" fill="#6e717a"/>
<polygon points="829,326 1104.700,393.900 1101.500,395.800 829,328.600" fill="#80838b"/>
<!-- bend shading -->
<polygon points="829,326 643,438 640,433 826,321.5" fill="url(#bendL)"/>
<!-- flange edge details: left -->
<g fill="none" stroke="#777a85" stroke-width="1.1">
<polygon points="823.6,268.2 830,268.9 830.4,271.6 825.2,271.9" fill="#8b8e99" stroke="none"/>
<path d="M825.5,272.5 L841.7,312.9 L828.9,324.4"/>
<path d="M830.2,270.8 L846.3,310.6 L845.6,316 L832.5,325.2"/>
<path d="M822.3,275.3 Q800,292 798.9,311 Q799,323 803.5,333.7" stroke="#7b7e89" stroke-width="1.2"/>
<path d="M824.6,280.3 Q806,294 805.2,310 Q805,322 808,333" stroke="#7b7e89" stroke-width="1.2"/>
<circle cx="836.5" cy="312.3" r="3.2"/>
<path d="M837.5,311 v3 M836,312.5 h1.5" stroke-width="0.8"/>
<path d="M792.6,318.5 v-3 h1.4"/>
<path d="M813.6,303.8 h-1.4 v3 h1.4"/>
<path d="M712.8,364.2 l-1.2,1.4 l1.2,1.6"/>
<path d="M672.4,388.6 q-1.4,0.4 -1.2,2.6"/>
<path d="M651.4,401.6 l-1.3,0.9 l1.3,1.2 z" fill="#858894"/>
</g>
<path d="M825,281.2 Q807.2,294.6 806.4,310 Q806.2,321 808.8,331.5" fill="none" stroke="#3f62da" stroke-width="1.3"/>
<path d="M829.6,276 L832.6,283.5 M843.2,311 L843,314.4" fill="none" stroke="#3f62da" stroke-width="1.3"/>
<!-- flange edge details: right -->
<g fill="none" stroke="#777a85" stroke-width="1.1">
<polygon points="1095.6,335.6 1101.6,336.3 1101.6,339 1097,339" fill="#8b8e99" stroke="none"/>
<path d="M1097,339 L1113.1,379.7 L1099.5,390.7"/>
<path d="M1101.5,337.8 L1118.3,379.7 L1117,383.6 L1104.7,392.4"/>
<path d="M1094.3,342 Q1073,354 1071.4,369.5 Q1070.4,377 1070.7,383.6" stroke="#7b7e89" stroke-width="1.2"/>
<path d="M1095.6,346.6 Q1079,357 1077.3,369 Q1075.6,377 1075.5,384.9" stroke="#7b7e89" stroke-width="1.2"/>
<path d="M1107.8,375.7 A3.3,3.3 0 1 0 1107.8,382.3"/>
<path d="M1108.6,377.8 v2.8" stroke-width="0.8"/>
</g>
<path d="M1096.2,347.4 Q1080.2,357.6 1078.5,369 Q1076.9,376 1076.7,383.4" fill="none" stroke="#3f5cd2" stroke-width="1.1"/>
<path d="M1114.6,378.6 L1114.2,382.2" fill="none" stroke="#3f5cd2" stroke-width="1.4"/>
<!-- triad -->
<g stroke-linecap="round">
<line x1="871.7" y1="388.4" x2="864.6" y2="372.5" stroke="#5ff3fb" stroke-width="1.1"/>
<line x1="871.7" y1="388.6" x2="857" y2="397.4" stroke="#5af05a" stroke-width="1.1"/>
<line x1="872.6" y1="388.6" x2="880" y2="390.4" stroke="#f05c5c" stroke-width="1.1"/>
</g>
<circle cx="864.3" cy="371.4" r="3" fill="#5ff5fb"/>
<circle cx="856.2" cy="397.8" r="2.7" fill="#5ff85f"/>
<circle cx="880.8" cy="390.7" r="2.4" fill="#ee5f5f"/>
<!-- annotation arrow -->
<polygon points="432.2,467 241.8,660 207.6,694.3 206.3,691.8 200,708.7 216.9,702.3 213.8,699.8 251.5,660" fill="#000"/>
</svg>
<div class="abs" style="left:1006px;top:704px;width:206px;height:62px;background:rgba(255,255,255,.34)"></div>
<svg class="abs" style="left:1000px;top:700px" width="217" height="71" viewBox="1000 700 217 71">
<defs>
<linearGradient id="wb" gradientUnits="userSpaceOnUse" x1="1020" y1="706" x2="1036" y2="744"><stop offset="0" stop-color="#3443a3" stop-opacity=".85"/><stop offset=".4" stop-color="#6f7fb0" stop-opacity=".65"/><stop offset="1" stop-color="#a9b1c4" stop-opacity=".55"/></linearGradient>
<linearGradient id="wr" gradientUnits="userSpaceOnUse" x1="1050" y1="722" x2="1045" y2="764"><stop offset="0" stop-color="#e8808c" stop-opacity=".75"/><stop offset=".6" stop-color="#d84a5e" stop-opacity=".7"/><stop offset="1" stop-color="#8a2a50" stop-opacity=".75"/></linearGradient>
</defs>
<path fill-rule="evenodd" d="M1046.1,737.2 L1045.0,738.5 L1043.6,739.6 L1041.9,740.4 L1040.0,740.9 L1037.9,741.2 L1035.7,741.1 L1033.3,740.9 L1030.8,740.3 L1028.4,739.5 L1025.9,738.4 L1023.4,737.1 L1021.0,735.5 L1018.8,733.8 L1016.7,732.0 L1014.9,730.0 L1013.2,728.0 L1011.9,725.8 L1010.8,723.7 L1010.0,721.6 L1009.5,719.5 L1009.4,717.6 L1009.6,715.7 L1010.1,714.1 L1010.9,712.6 L1012.0,711.3 L1013.4,710.2 L1015.1,709.4 L1017.0,708.9 L1019.1,708.6 L1021.3,708.7 L1023.7,708.9 L1026.2,709.5 L1028.6,710.3 L1031.1,711.4 L1033.6,712.7 L1036.0,714.3 L1038.2,716.0 L1040.3,717.8 L1042.1,719.8 L1043.8,721.8 L1045.1,724.0 L1046.2,726.1 L1047.0,728.2 L1047.5,730.3 L1047.6,732.2 L1047.4,734.1 L1046.9,735.7Z M1045.3,737.8 L1046.0,736.6 L1046.4,735.1 L1046.6,733.6 L1046.4,731.9 L1046.0,730.2 L1045.3,728.4 L1044.3,726.6 L1043.1,724.8 L1041.7,723.0 L1040.0,721.3 L1038.2,719.7 L1036.3,718.3 L1034.3,717.0 L1032.2,715.8 L1030.0,714.9 L1027.9,714.1 L1025.8,713.6 L1023.7,713.3 L1021.8,713.3 L1020.0,713.5 L1018.4,713.9 L1017.0,714.5 L1015.8,715.4 L1014.9,716.5 L1014.2,717.7 L1013.8,719.1 L1013.7,720.7 L1013.8,722.3 L1014.3,724.1 L1015.0,725.8 L1015.9,727.7 L1017.1,729.5 L1018.6,731.2 L1020.2,732.9 L1022.0,734.5 L1023.9,736.0 L1026.0,737.3 L1028.1,738.4 L1030.2,739.4 L1032.4,740.1 L1034.5,740.6 L1036.5,740.9 L1038.4,741.0 L1040.2,740.8 L1041.8,740.4 L1043.2,739.7 L1044.4,738.9Z" fill="url(#wb)"/>
<path fill-rule="evenodd" d="M1059.9,724.5 L1061.2,725.4 L1062.4,726.6 L1063.3,728.1 L1064.1,729.9 L1064.5,731.9 L1064.8,734.0 L1064.8,736.4 L1064.5,738.8 L1064.0,741.3 L1063.2,743.9 L1062.2,746.4 L1061.0,748.9 L1059.7,751.2 L1058.1,753.5 L1056.4,755.5 L1054.6,757.4 L1052.8,758.9 L1050.8,760.3 L1048.9,761.3 L1047.0,762.0 L1045.1,762.4 L1043.3,762.4 L1041.7,762.1 L1040.1,761.5 L1038.8,760.6 L1037.6,759.4 L1036.7,757.9 L1035.9,756.1 L1035.5,754.1 L1035.2,752.0 L1035.2,749.6 L1035.5,747.2 L1036.0,744.7 L1036.8,742.1 L1037.8,739.6 L1039.0,737.1 L1040.3,734.8 L1041.9,732.5 L1043.6,730.5 L1045.4,728.6 L1047.2,727.1 L1049.2,725.7 L1051.1,724.7 L1053.0,724.0 L1054.9,723.6 L1056.7,723.6 L1058.3,723.9Z M1057.9,725.1 L1056.7,724.7 L1055.4,724.5 L1053.9,724.6 L1052.4,725.1 L1050.8,725.8 L1049.2,726.8 L1047.6,728.0 L1046.0,729.5 L1044.4,731.2 L1042.9,733.1 L1041.6,735.2 L1040.3,737.3 L1039.3,739.5 L1038.3,741.8 L1037.6,744.1 L1037.0,746.3 L1036.7,748.5 L1036.6,750.5 L1036.7,752.4 L1036.9,754.1 L1037.4,755.6 L1038.1,756.9 L1039.0,757.9 L1040.1,758.7 L1041.3,759.1 L1042.6,759.3 L1044.1,759.2 L1045.6,758.7 L1047.2,758.0 L1048.8,757.0 L1050.4,755.8 L1052.0,754.3 L1053.6,752.6 L1055.0,750.7 L1056.4,748.7 L1057.7,746.5 L1058.7,744.3 L1059.7,742.0 L1060.4,739.7 L1061.0,737.5 L1061.3,735.3 L1061.4,733.3 L1061.3,731.4 L1061.0,729.7 L1060.6,728.2 L1059.9,726.9 L1059.0,725.9Z" fill="url(#wr)"/>
<path d="M1037,736.8 Q1026,737 1020.5,741.5 Q1015,747 1018.5,751 Q1023,754.5 1032.5,750.5 Q1024,751.5 1020.5,749 Q1018.5,745.5 1023,741.5 Q1029,737.8 1037,736.8z" fill="rgba(170,178,195,.7)"/>
</svg>
<span class="abs" style="left:1076.500px;top:708.500px;height:34px;line-height:34px;font-size:28px;font-weight:900;color:#3cb870;opacity:.52;white-space:nowrap;letter-spacing:1.500px;-webkit-text-stroke:0.9px #3cb870">野火论坛</span>
<span class="abs" style="left:1064px;top:743px;height:20px;line-height:20px;font-size:16.100px;color:rgba(60,130,170,.5);white-space:nowrap">www.proewildfire.cn</span>

</body>
</html>
